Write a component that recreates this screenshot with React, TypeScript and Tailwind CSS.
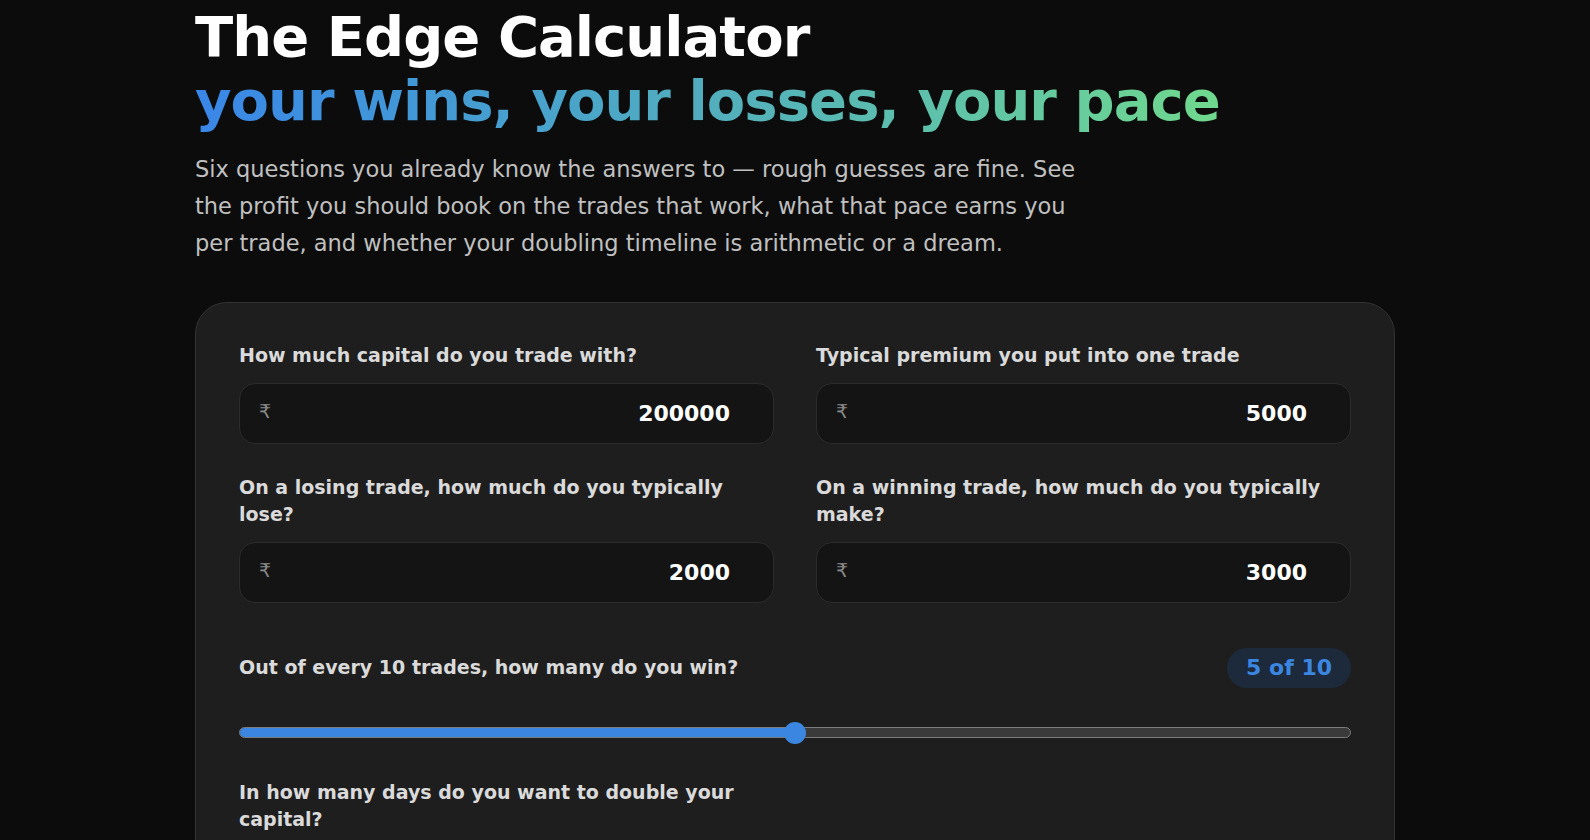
import React from 'react';

const FIELDS = [
  { label: 'How much capital do you trade with?', value: '200000' },
  { label: 'Typical premium you put into one trade', value: '5000' },
  { label: 'On a losing trade, how much do you typically lose?', value: '2000' },
  { label: 'On a winning trade, how much do you typically make?', value: '3000' },
];

const WINS = 5;
const OUT_OF = 10;

function MoneyField({ label, value }: { label: string; value: string }) {
  return (
    <label className="flex flex-col">
      <span className="text-[19px] leading-[27.5px] font-bold text-[#dadada]">{label}</span>
      <div className="mt-[13px] flex h-[61px] items-center rounded-2xl border border-[#2c2c2c] bg-[#141414] pl-[19px] pr-[43px]">
        <span className="mb-[3px] text-[19px] text-[#8a8a8a]">₹</span>
        <input
          readOnly
          value={value}
          className="min-w-0 flex-1 bg-transparent text-right text-[22px] font-bold text-white outline-none"
        />
      </div>
    </label>
  );
}

export default function App() {
  const pct = (WINS / OUT_OF) * 100;

  return (
    <div className="min-h-screen bg-[#0c0c0c] font-['DejaVu_Sans',sans-serif]">
      <div className="mx-auto w-[1200px] pt-[5px] pb-20">
        <h1 className="text-[56px] leading-[64px] font-bold tracking-[-0.017em]">
          <span className="block text-white">The Edge Calculator</span>
          <span className="inline-block bg-gradient-to-r from-[#3a86e8] via-[#52aebd] to-[#70d88c] bg-clip-text text-transparent">
            your wins, your losses, your pace
          </span>
        </h1>
        <p className="mt-[18px] max-w-[900px] text-[22.5px] leading-[37px] text-[#c0c0c0]">
          Six questions you already know the answers to — rough guesses are fine. See the profit you
          should book on the trades that work, what that pace earns you per trade, and whether your
          doubling timeline is arithmetic or a dream.
        </p>

        <div className="mt-[40px] rounded-[32px] border border-[#333333] bg-[#1e1e1e] px-[43px] pt-[39px] pb-[43px]">
          <div className="grid grid-cols-2 gap-x-[42px] gap-y-[30px]">
            {FIELDS.map((f) => (
              <MoneyField key={f.label} label={f.label} value={f.value} />
            ))}
          </div>

          <div className="mt-[45px]">
            <div className="flex h-[40px] items-center justify-between">
              <span className="text-[19px] leading-[27.5px] font-bold text-[#dadada]">
                Out of every 10 trades, how many do you win?
              </span>
              <span className="flex h-[40px] items-center rounded-full bg-[#1c2a3b] px-[19px] text-[22px] font-bold text-[#3b86e0]">
                {WINS} of {OUT_OF}
              </span>
            </div>
            <div className="relative mt-[34px] flex h-[22px] items-center">
              <div className="h-[11px] w-full overflow-hidden rounded-full border border-[#7c7c7c] bg-[#3a3a3a]">
                <div className="h-full bg-[#3b86e0]" style={{ width: `${pct}%` }} />
              </div>
              <div
                className="absolute top-0 -ml-[11px] h-[22px] w-[22px] rounded-full bg-[#3b86e0]"
                style={{ left: `${pct}%` }}
              />
            </div>
          </div>

          <div className="mt-[35px] grid grid-cols-2 gap-x-[42px]">
            <label className="flex flex-col">
              <span className="text-[19px] leading-[27.5px] font-bold text-[#dadada]">
                In how many days do you want to double your capital?
              </span>
              <div className="mt-[13px] flex h-[61px] items-center rounded-2xl border border-[#2c2c2c] bg-[#141414] pl-[19px] pr-[43px]">
                <input
                  readOnly
                  value="30"
                  className="min-w-0 flex-1 bg-transparent text-right text-[22px] font-bold text-white outline-none"
                />
                <span className="ml-3 text-[19px] text-[#8a8a8a]">days</span>
              </div>
            </label>
          </div>
        </div>
      </div>
    </div>
  );
}
